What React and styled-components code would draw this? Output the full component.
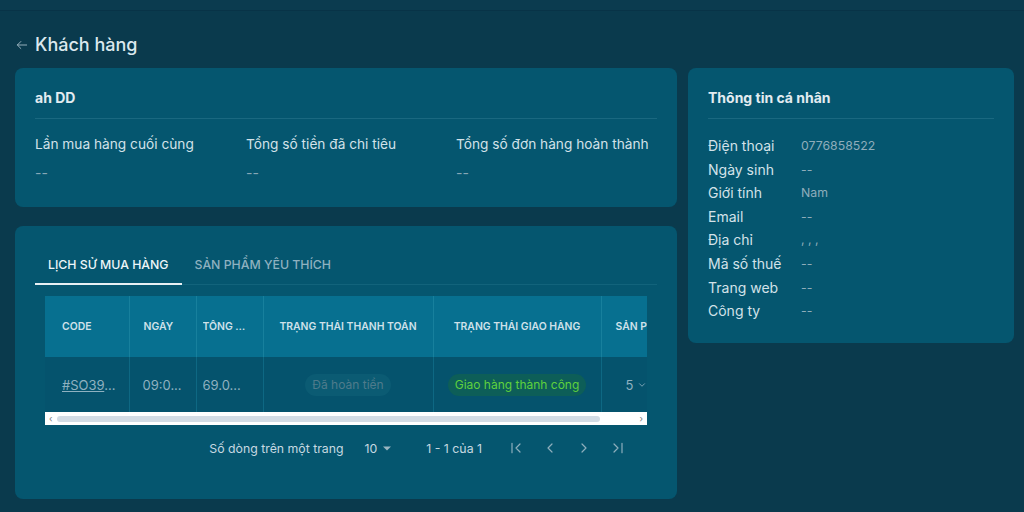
import styled, { createGlobalStyle } from "styled-components";

const GlobalStyle = createGlobalStyle`
  body {
    margin: 0;
    background: #0a3a4d;
    font-family: Inter, "Noto Sans", "Liberation Sans", sans-serif;
    color: #d7e5ec;
  }
  * { box-sizing: border-box; }
`;

const Page = styled.div`
  width: 1024px;
  height: 512px;
  overflow: hidden;
  background: #0a3a4d;
`;

const TopBar = styled.div`
  height: 11px;
  background: #0b3b4f;
  border-bottom: 1px solid #083347;
`;

const Header = styled.div`
  display: flex;
  align-items: center;
  gap: 6px;
  padding: 10px 0 0 15px;
  height: 57px;
  h1 {
    margin: 0;
    font-size: 18px;
    font-weight: 500;
    color: #dce8ee;
  }
  svg { color: #9fb7c3; }
`;

const Layout = styled.div`
  display: grid;
  grid-template-columns: 662px 326px;
  gap: 11px;
  padding: 0 10px 0 15px;
  align-items: start;
`;

const Column = styled.div`
  display: flex;
  flex-direction: column;
  gap: 19px;
`;

const Card = styled.section`
  background: #05566f;
  border-radius: 8px;
  padding: ${(p) => p.$pad || "20px"};
  height: ${(p) => p.$h};
`;

const CardTitle = styled.h3`
  margin: 0;
  font-size: 14px;
  font-weight: 700;
  line-height: 20px;
  color: #e2ecf1;
  padding-bottom: 10px;
  border-bottom: 1px solid #1a6880;
`;

const Stats = styled.div`
  display: grid;
  grid-template-columns: 211px 210px 1fr;
  padding-top: 16px;
`;

const Stat = styled.div`
  display: flex;
  flex-direction: column;
  gap: 9px;
  span:first-child {
    font-size: 13.7px;
    line-height: 19px;
    color: #d3e2e9;
    white-space: nowrap;
  }
  span:last-child {
    font-size: 14px;
    line-height: 19px;
    color: #86a7b6;
  }
`;

const InfoList = styled.dl`
  margin: 0;
  padding-top: 17px;
  display: grid;
  grid-template-columns: 93px 1fr;
  row-gap: 4.6px;
  dt {
    font-size: 14px;
    line-height: 19px;
    color: #d3e2e9;
  }
  dd {
    margin: 0;
    font-size: 12.3px;
    line-height: 19px;
    color: #8eadbb;
  }
`;

const Tabs = styled.div`
  display: flex;
  border-bottom: 1px solid #12637b;
`;

const Tab = styled.button`
  background: none;
  border: none;
  font-family: inherit;
  font-size: 12.3px;
  font-weight: 500;
  height: 39px;
  padding: 0 13px;
  color: ${(p) => (p.$active ? "#eef5f8" : "#8fb1c0")};
  border-bottom: 2px solid ${(p) => (p.$active ? "#e8f0f4" : "transparent")};
  margin-bottom: -1px;
  cursor: pointer;
`;

const TableWrap = styled.div`
  margin: 11px 10px 0;
  overflow: hidden;
`;

const Table = styled.table`
  border-collapse: collapse;
  table-layout: fixed;
  width: 680px;
  th {
    background: #077090;
    height: 61px;
    font-size: 10.4px;
    font-weight: 600;
    color: #cfe1ea;
    text-transform: uppercase;
    white-space: nowrap;
    overflow: hidden;
    border-right: 1px solid #17809d;
    padding: 0 6px;
  }
  td {
    background: #05536d;
    height: 55px;
    font-size: 13px;
    color: #8fb1c0;
    white-space: nowrap;
    border-right: 1px solid #0e6883;
    padding: 0 6px;
  }
`;

const Cell = styled.div`
  text-align: ${(p) => p.$align || "left"};
  padding-left: ${(p) => p.$pl || "0"};
  padding-right: ${(p) => p.$pr || "0"};
  overflow: hidden;
  text-overflow: ellipsis;
  white-space: nowrap;
`;

const CodeLink = styled.a`
  color: #8fb1c0;
  text-decoration: underline;
`;

const Chip = styled.span`
  display: inline-block;
  padding: 3px 7px;
  border-radius: 12px;
  font-size: 12px;
  line-height: 16px;
  background: ${(p) => (p.$tone === "green" ? "#0d5e58" : "#0b5b73")};
  color: ${(p) => (p.$tone === "green" ? "#5fd13d" : "#4f7b8c")};
`;

const ScrollBar = styled.div`
  margin: 0 10px;
  height: 13px;
  background: #ffffff;
  display: flex;
  align-items: center;
  padding: 0 4px;
  gap: 5px;
  span {
    font-size: 9px;
    color: #777;
    line-height: 1;
  }
`;

const Thumb = styled.div`
  height: 6px;
  width: 543px;
  border-radius: 3px;
  background: #d3dce5;
`;

const Pagination = styled.div`
  display: flex;
  align-items: center;
  justify-content: flex-end;
  height: 46px;
  padding-right: 22px;
  font-size: 12.3px;
  color: #c7d9e1;
`;

const RowsSelect = styled.div`
  display: flex;
  align-items: center;
  gap: 5px;
  margin: 0 34px 0 21px;
  svg { color: #9ab5c1; }
`;

const PageInfo = styled.span`
  margin-right: 17px;
`;

const IconBtn = styled.button`
  background: none;
  border: none;
  width: 34px;
  display: flex;
  justify-content: center;
  color: #8eaebc;
  padding: 0;
`;

const Icon = ({ d, size = 14, sw = 2 }) => (
  <svg width={size} height={size} viewBox="0 0 24 24" fill="none" stroke="currentColor" strokeWidth={sw} strokeLinecap="round" strokeLinejoin="round">
    <path d={d} />
  </svg>
);

const info = [
  ["Điện thoại", "0776858522"],
  ["Ngày sinh", "--"],
  ["Giới tính", "Nam"],
  ["Email", "--"],
  ["Địa chỉ", ", , ,"],
  ["Mã số thuế", "--"],
  ["Trang web", "--"],
  ["Công ty", "--"],
];

export default function App() {
  return (
    <Page>
      <GlobalStyle />
      <TopBar />
      <Header>
        <Icon d="M20 12H4M10 18l-6-6 6-6" size={14} sw={1.6} />
        <h1>Khách hàng</h1>
      </Header>
      <Layout>
        <Column>
          <Card $h="139px">
            <CardTitle>ah DD</CardTitle>
            <Stats>
              <Stat><span>Lần mua hàng cuối cùng</span><span>--</span></Stat>
              <Stat><span>Tổng số tiền đã chi tiêu</span><span>--</span></Stat>
              <Stat><span>Tổng số đơn hàng hoàn thành</span><span>--</span></Stat>
            </Stats>
          </Card>
          <Card $h="273px">
            <Tabs>
              <Tab $active>LỊCH SỬ MUA HÀNG</Tab>
              <Tab>SẢN PHẨM YÊU THÍCH</Tab>
            </Tabs>
            <TableWrap>
              <Table>
                <colgroup>
                  <col style={{ width: 84 }} />
                  <col style={{ width: 67 }} />
                  <col style={{ width: 67 }} />
                  <col style={{ width: 170 }} />
                  <col style={{ width: 168 }} />
                  <col style={{ width: 124 }} />
                </colgroup>
                <thead>
                  <tr>
                    <th><Cell $pl="11px">Code</Cell></th>
                    <th><Cell $pl="8px">Ngày</Cell></th>
                    <th><Cell $pr="6px">Tổng tiền</Cell></th>
                    <th><Cell $align="center">Trạng thái thanh toán</Cell></th>
                    <th><Cell $align="center">Trạng thái giao hàng</Cell></th>
                    <th><Cell $pl="8px">Sản phẩm</Cell></th>
                  </tr>
                </thead>
                <tbody>
                  <tr>
                    <td><Cell $pl="11px"><CodeLink>#SO39</CodeLink>...</Cell></td>
                    <td><Cell $pl="7px">09:0...</Cell></td>
                    <td><Cell>69.0...</Cell></td>
                    <td><Cell $align="center"><Chip>Đã hoàn tiền</Chip></Cell></td>
                    <td><Cell $align="center"><Chip $tone="green">Giao hàng thành công</Chip></Cell></td>
                    <td><Cell $pl="18px">5 <Icon d="M6 9l6 6 6-6" size={10} /></Cell></td>
                  </tr>
                </tbody>
              </Table>
            </TableWrap>
            <ScrollBar>
              <span>‹</span>
              <Thumb />
              <span style={{ marginLeft: "auto" }}>›</span>
            </ScrollBar>
            <Pagination>
              <span>Số dòng trên một trang</span>
              <RowsSelect>
                10
                <svg width="10" height="10" viewBox="0 0 10 10"><path d="M1 3.5h8L5 7.5z" fill="currentColor" /></svg>
              </RowsSelect>
              <PageInfo>1 - 1 của 1</PageInfo>
              <IconBtn><Icon d="M6 5v14M18 6l-6 6 6 6" size={16} sw={1.8} /></IconBtn>
              <IconBtn><Icon d="M15 6l-6 6 6 6" size={16} sw={1.8} /></IconBtn>
              <IconBtn><Icon d="M9 6l6 6-6 6" size={16} sw={1.8} /></IconBtn>
              <IconBtn><Icon d="M6 6l6 6-6 6M18 5v14" size={16} sw={1.8} /></IconBtn>
            </Pagination>
          </Card>
        </Column>
        <Card $h="275px">
          <CardTitle>Thông tin cá nhân</CardTitle>
          <InfoList>
            {info.map(([k, v]) => [
              <dt key={k}>{k}</dt>,
              <dd key={k + "v"}>{v}</dd>,
            ])}
          </InfoList>
        </Card>
      </Layout>
    </Page>
  );
}
